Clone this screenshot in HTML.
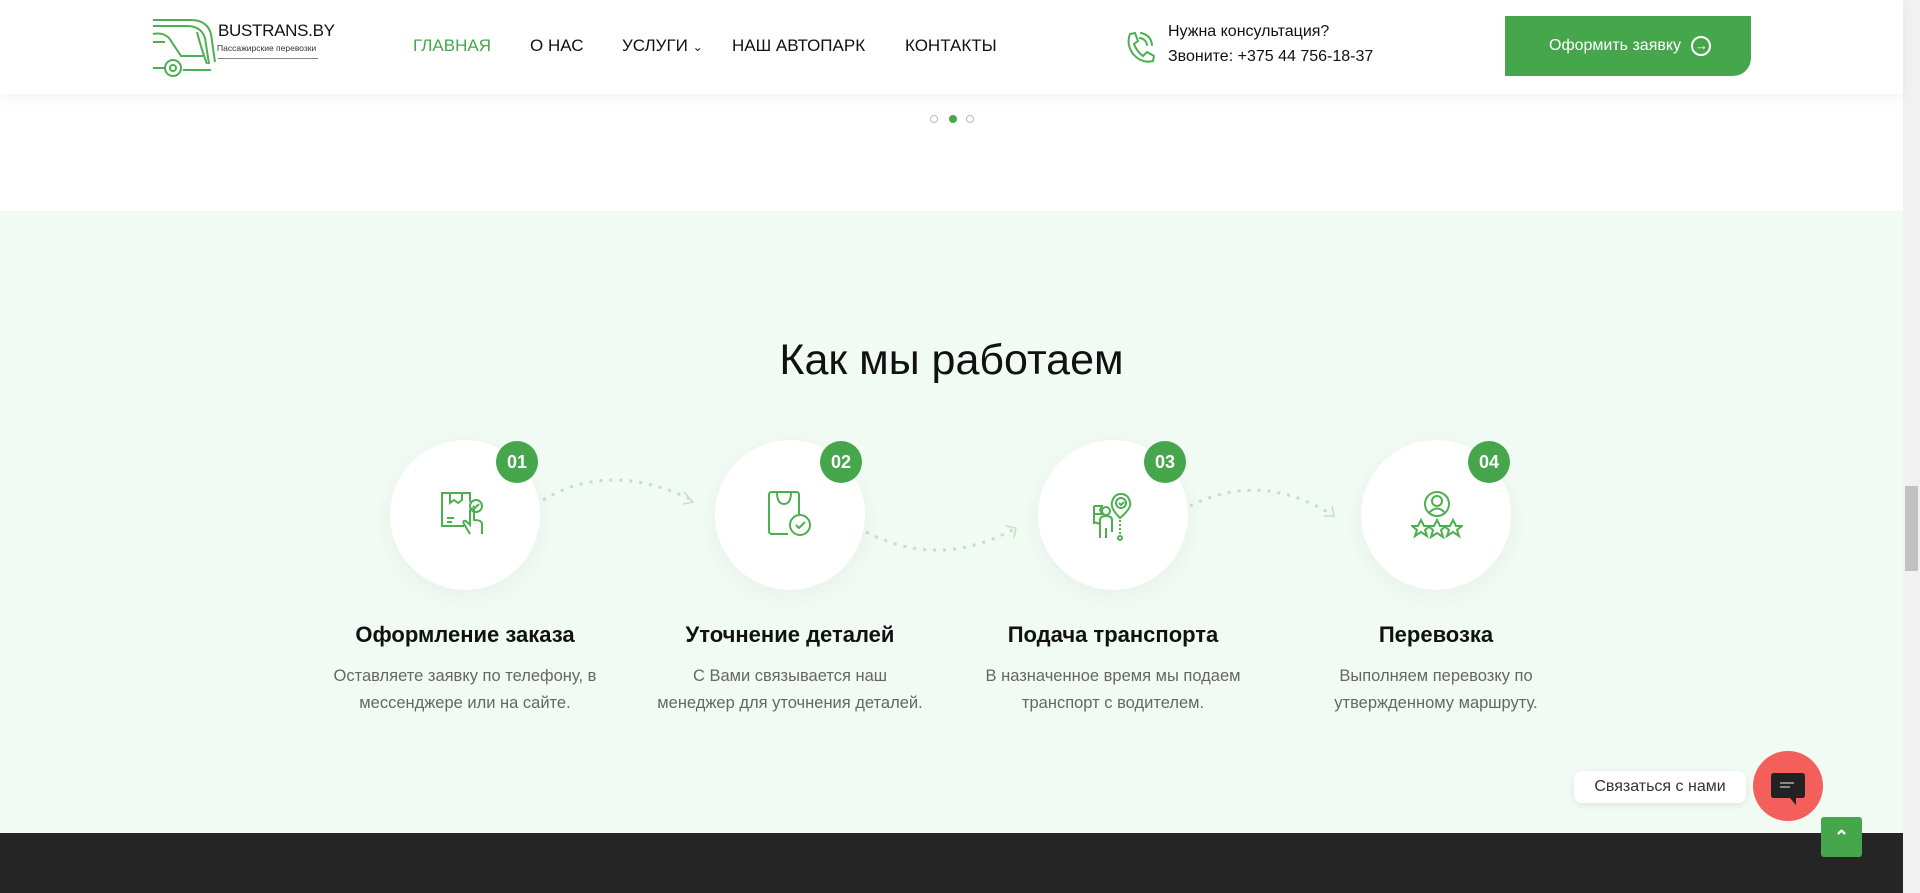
<!DOCTYPE html>
<html><head><meta charset="utf-8"><style>
*{margin:0;padding:0;box-sizing:border-box}
body{width:1920px;height:893px;overflow:hidden;position:relative;background:#fff;font-family:"Liberation Sans",sans-serif;color:#111}
.abs{position:absolute}
header{position:absolute;left:0;top:0;width:1903px;height:94px;background:#fff;box-shadow:0 4px 12px rgba(0,0,0,.05);z-index:2}
.nav{position:absolute;top:36px;font-size:17px;color:#111;white-space:nowrap}
.green{background:#f1faf3}
.circ{position:absolute;width:150px;height:150px;border-radius:50%;background:#fff;box-shadow:0 6px 20px rgba(60,120,70,.06)}
.badge{position:absolute;width:42px;height:42px;border-radius:50%;background:#46a64b;color:#fff;font-weight:bold;font-size:18px;text-align:center;line-height:42px}
.h{position:absolute;width:320px;text-align:center;font-weight:bold;font-size:22px;top:622px}
.d{position:absolute;width:320px;text-align:center;font-size:16.5px;color:#666;line-height:27px;top:663px;white-space:nowrap}
</style></head><body>
<header>
 <svg class="abs" style="left:151px;top:12px" width="68" height="66" viewBox="0 0 68 66" fill="none" stroke="#4caf50" stroke-width="2">
  <path d="M2 8 H40 Q56 8 60 22 L64 50"/><path d="M2 14 H36 Q50 14 54 26 L58 52"/>
  <path d="M2 22 Q12 20 18 26 L30 44 H52"/><path d="M2 30 H14"/><path d="M2 56 H14"/>
  <path d="M46 20 Q50 36 56 52"/><circle cx="22" cy="56" r="8"/><circle cx="22" cy="56" r="3"/>
  <path d="M32 58 H60"/>
 </svg>
 <div class="abs" style="left:218px;top:21px;font-size:17px;color:#111;letter-spacing:-.3px">BUSTRANS.BY</div>
 <div class="abs" style="left:217px;top:43px;font-size:8.5px;color:#333">Пассажирские перевозки</div>
 <div class="abs" style="left:218px;top:58px;width:100px;height:1px;background:#888"></div>
 <div class="nav" style="left:413px;color:#46a64b">ГЛАВНАЯ</div>
 <div class="nav" style="left:530px">О НАС</div>
 <div class="nav" style="left:622px">УСЛУГИ <span style="font-size:12px">&#8964;</span></div>
 <div class="nav" style="left:732px">НАШ АВТОПАРК</div>
 <div class="nav" style="left:905px">КОНТАКТЫ</div>
 <svg class="abs" style="left:1124px;top:30px" width="32" height="34" viewBox="0 0 32 34" fill="none" stroke="#4caf50" stroke-width="2" stroke-linecap="round">
  <path d="M6 4 L11 3 L14 11 L10 14 Q13 22 19 26 L23 22 L30 26 L29 31 Q18 34 9 24 Q2 14 6 4Z"/>
  <path d="M16 8 Q22 9 23 15"/><path d="M17 3 Q27 5 28 15"/>
 </svg>
 <div class="abs" style="left:1168px;top:23px;font-size:16px">Нужна консультация?</div>
 <div class="abs" style="left:1168px;top:48px;font-size:16px">Звоните: +375 44 756-18-37</div>
 <div class="abs" style="left:1505px;top:16px;width:246px;height:60px;background:#46a64b;border-radius:0 0 18px 0;color:#fff;font-size:16px;line-height:60px;padding-left:44px">Оформить заявку <span style="display:inline-block;width:20px;height:20px;border:2px solid #fff;border-radius:50%;text-align:center;line-height:15px;font-size:13px;margin-left:6px;vertical-align:middle">&#8594;</span></div>
</header>
<div class="abs" style="left:930px;top:115px;width:8px;height:8px;border:1px solid #bbb;border-radius:50%"></div>
<div class="abs" style="left:949px;top:115px;width:8px;height:8px;background:#46a64b;border-radius:50%"></div>
<div class="abs" style="left:966px;top:115px;width:8px;height:8px;border:1px solid #bbb;border-radius:50%"></div>

<div class="abs green" style="left:0;top:211px;width:1903px;height:622px"></div>
<div class="abs" style="left:0;top:336px;width:1903px;text-align:center;font-size:43px;color:#111">Как мы работаем</div>
<svg class="abs" style="left:0;top:440px" width="1903" height="130" fill="none" stroke="#bfe3c3" stroke-width="3" stroke-dasharray="3 7">
 <path d="M543 60 Q610 20 692 60"/><path d="M684 52 L693 62 L683 64" stroke-dasharray="none" stroke-width="1.5"/>
 <path d="M866 92 Q940 130 1016 88"/><path d="M1006 86 L1016 88 L1014 98" stroke-dasharray="none" stroke-width="1.5"/>
 <path d="M1190 66 Q1262 30 1334 76"/><path d="M1324 76 L1334 76 L1332 66" stroke-dasharray="none" stroke-width="1.5"/>
</svg>
<div class="circ" style="left:390px;top:440px"></div>
<div class="circ" style="left:715px;top:440px"></div>
<div class="circ" style="left:1038px;top:440px"></div>
<div class="circ" style="left:1361px;top:440px"></div>
<div class="badge" style="left:496px;top:441px">01</div>
<div class="badge" style="left:820px;top:441px">02</div>
<div class="badge" style="left:1144px;top:441px">03</div>
<div class="badge" style="left:1468px;top:441px">04</div>
<svg class="abs" style="left:440px;top:490px" width="50" height="50" viewBox="0 0 50 50" fill="none" stroke="#4caf50" stroke-width="2">
 <path d="M24 36 H2 V3 H30 V12"/><path d="M10 3 V13 L14 10 L18 13 L22 10 V3"/><path d="M7 28 H14 M7 32 H12"/>
 <circle cx="36" cy="16" r="6"/><path d="M33 16 l2 2 l4-4"/>
 <path d="M30 44 L24 34 Q22 30 26 31 L30 35 V20 Q32 17 34 20 V30 Q42 30 42 34 V44"/>
</svg>
<svg class="abs" style="left:766px;top:490px" width="50" height="50" viewBox="0 0 50 50" fill="none" stroke="#4caf50" stroke-width="2">
 <path d="M22 44 H6 Q3 44 3 41 V5 Q3 2 6 2 H30 Q33 2 33 5 V24"/><path d="M11 2 Q11 14 18 14 Q25 14 25 2"/>
 <circle cx="34" cy="35" r="10"/><path d="M30 35 l3 3 l6-6"/>
</svg>
<svg class="abs" style="left:1088px;top:492px" width="50" height="50" viewBox="0 0 50 50" fill="none" stroke="#4caf50" stroke-width="2">
 <path d="M32 26 Q22 16 24 10 Q26 2 33 2 Q40 2 42 10 Q44 16 32 26Z"/><circle cx="33" cy="11" r="5"/><path d="M31 11 l2 2 l3-3"/>
 <path d="M32 28 V44" stroke-dasharray="2 2"/><circle cx="32" cy="46" r="2"/>
 <circle cx="18" cy="19" r="4"/><path d="M12 46 V28 Q12 24 18 24 Q24 24 24 28 V40 M18 46 V36 M6 30 L12 32 M6 14 V32 M6 14 H14 L12 18 L14 22 H6"/>
</svg>
<svg class="abs" style="left:1411px;top:490px" width="52" height="50" viewBox="0 0 52 50" fill="none" stroke="#4caf50" stroke-width="2">
 <circle cx="26" cy="14" r="12"/><circle cx="26" cy="11" r="5"/><path d="M18 23 Q26 14 34 23"/>
 <path d="M10 30 l3 6 h6 l-5 4 l2 6 l-6-4 l-6 4 l2-6 l-5-4 h6z"/>
 <path d="M42 30 l3 6 h6 l-5 4 l2 6 l-6-4 l-6 4 l2-6 l-5-4 h6z"/>
 <path d="M26 30 l3 6 h6 l-5 4 l2 7 l-6-4 l-6 4 l2-7 l-5-4 h6z"/>
</svg>
<div class="h" style="left:305px">Оформление заказа</div>
<div class="h" style="left:630px">Уточнение деталей</div>
<div class="h" style="left:953px">Подача транспорта</div>
<div class="h" style="left:1276px">Перевозка</div>
<div class="d" style="left:305px">Оставляете заявку по телефону, в<br>мессенджере или на сайте.</div>
<div class="d" style="left:630px">С Вами связывается наш<br>менеджер для уточнения деталей.</div>
<div class="d" style="left:953px">В назначенное время мы подаем<br>транспорт с водителем.</div>
<div class="d" style="left:1276px">Выполняем перевозку по<br>утвержденному маршруту.</div>

<div class="abs" style="left:0;top:833px;width:1903px;height:60px;background:#252525"></div>
<div class="abs" style="left:1574px;top:771px;width:172px;height:32px;background:#fff;border-radius:8px;box-shadow:0 2px 8px rgba(0,0,0,.08);font-size:16px;color:#333;line-height:32px;text-align:center">Связаться с нами</div>
<div class="abs" style="left:1753px;top:751px;width:70px;height:70px;border-radius:50%;background:#f45f5c"></div>
<svg class="abs" style="left:1770px;top:771px" width="36" height="36" viewBox="0 0 36 36"><path d="M4 2 H32 Q35 2 35 5 V24 Q35 27 32 27 H26 L26 34 L20 27 H4 Q1 27 1 24 V5 Q1 2 4 2Z" fill="#222"/><path d="M10 12 H24 M10 16 H20" stroke="#888" stroke-width="2"/></svg>
<div class="abs" style="left:1821px;top:817px;width:41px;height:40px;background:#46a64b;border-radius:3px;color:#fff;text-align:center;line-height:40px;font-size:18px;font-weight:bold">&#8963;</div>
<div class="abs" style="left:1903px;top:0;width:17px;height:893px;background:#f1f1f1"></div>
<div class="abs" style="left:1905px;top:486px;width:13px;height:85px;background:#c1c1c1"></div>
</body></html>
